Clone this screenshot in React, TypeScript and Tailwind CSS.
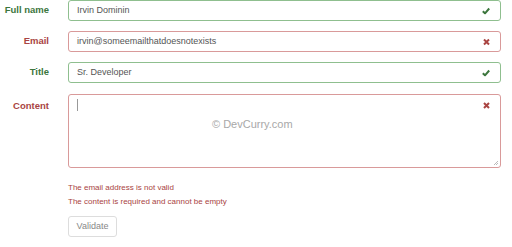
import React from "react";

const ok = "#3c763d";
const bad = "#a94442";

function Check() {
  return (
    <svg width="8" height="7" viewBox="0 0 8 7" className="absolute right-[10px] top-1/2 -translate-y-1/2">
      <path d="M0.8 3.8 L3 5.8 L7.2 1" fill="none" stroke={ok} strokeWidth="2" />
    </svg>
  );
}

function Cross({ top }: { top?: boolean }) {
  return (
    <svg
      width="7"
      height="7"
      viewBox="0 0 7 7"
      className={top ? "absolute right-[10px] top-[7px]" : "absolute right-[10px] top-1/2 -translate-y-1/2"}
    >
      <path d="M1 1 L6 6 M6 1 L1 6" fill="none" stroke={bad} strokeWidth="2" />
    </svg>
  );
}

function Row({ label, value, valid }: { label: string; value: string; valid: boolean }) {
  return (
    <div className="flex items-center h-[21px]">
      <label
        className="w-[49px] text-right text-[9.5px] font-bold shrink-0"
        style={{ color: valid ? ok : bad }}
      >
        {label}
      </label>
      <div
        className={
          "relative ml-[19px] w-[433px] h-[21px] rounded-[3px] border bg-white flex items-center pl-[8px] text-[9px] text-[#555] " +
          (valid ? "border-[#8fbf8f]" : "border-[#d99a9a]")
        }
      >
        {value}
        {valid ? <Check /> : <Cross />}
      </div>
    </div>
  );
}

export default function App() {
  return (
    <div className="w-[512px] h-[247px] bg-white overflow-hidden font-['Liberation_Sans',Arial,sans-serif]">
      <div className="flex flex-col gap-[10px]">
        <Row label="Full name" value="Irvin Dominin" valid />
        <Row label="Email" value="irvin@someemailthatdoesnotexists" valid={false} />
        <Row label="Title" value="Sr. Developer" valid />
      </div>
      <div className="flex mt-[11px]">
        <label className="w-[49px] text-right text-[9.5px] font-bold text-[#a94442] pt-[5px] shrink-0">Content</label>
        <div className="relative ml-[19px] w-[433px] h-[74px] rounded-[3px] border border-[#d99a9a] bg-white">
          <div className="absolute left-[8px] top-[4px] w-px h-[12px] bg-[#999]" />
          <Cross top />
          <div className="absolute left-[143px] top-[21px] text-[11px] text-[#a8a8a8]">© DevCurry.com</div>
          <svg width="6" height="6" viewBox="0 0 6 6" className="absolute right-[1px] bottom-[1px]">
            <path d="M5 1 L1 5 M5 3 L3 5" stroke="#aaa" strokeWidth="0.8" />
          </svg>
        </div>
      </div>
      <div className="ml-[68px] mt-[13px] text-[8px] text-[#a94442] leading-[14px]">
        <div>The email address is not valid</div>
        <div>The content is required and cannot be empty</div>
      </div>
      <button className="ml-[68px] mt-[7px] w-[49px] h-[21px] rounded-[3px] border border-[#ddd] bg-white text-[9px] text-[#888]">
        Validate
      </button>
    </div>
  );
}
